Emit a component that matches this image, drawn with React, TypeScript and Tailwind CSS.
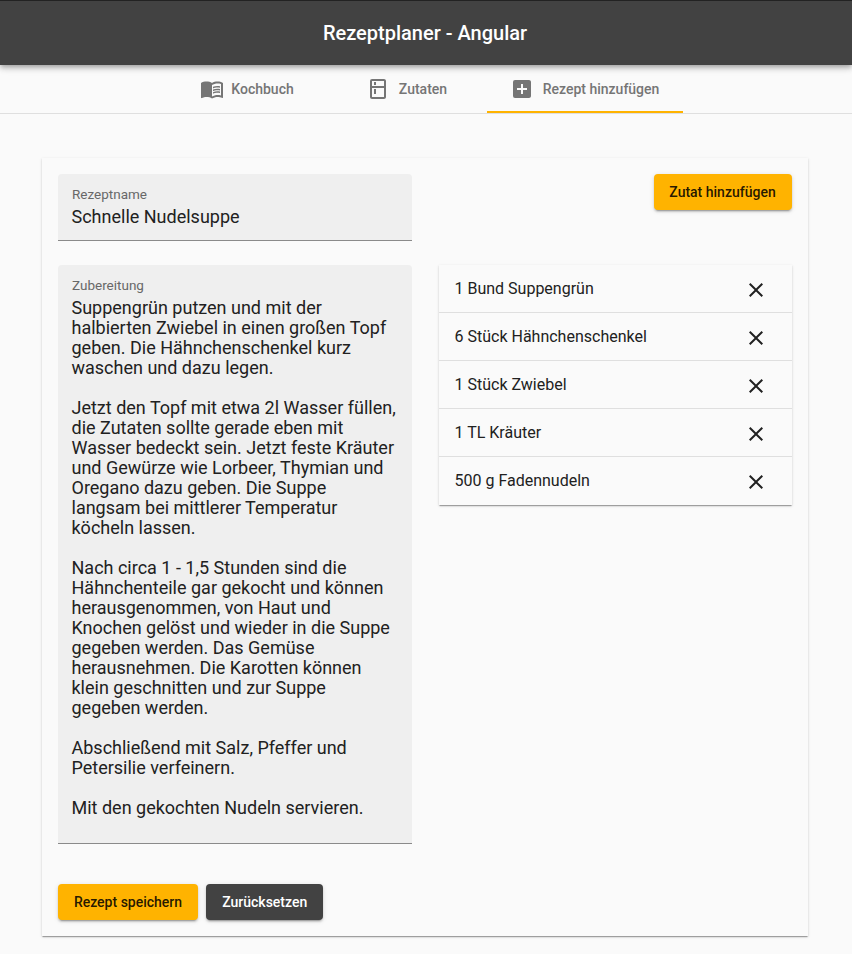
import React from "react";
import { MdMenuBook, MdOutlineKitchen, MdAddBox, MdClose } from "react-icons/md";

const ingredients = [
  "1 Bund Suppengrün",
  "6 Stück Hähnchenschenkel",
  "1 Stück Zwiebel",
  "1 TL Kräuter",
  "500 g Fadennudeln",
];

const preparation = `Suppengrün putzen und mit der
halbierten Zwiebel in einen großen Topf
geben. Die Hähnchenschenkel kurz
waschen und dazu legen.

Jetzt den Topf mit etwa 2l Wasser füllen,
die Zutaten sollte gerade eben mit
Wasser bedeckt sein. Jetzt feste Kräuter
und Gewürze wie Lorbeer, Thymian und
Oregano dazu geben. Die Suppe
langsam bei mittlerer Temperatur
köcheln lassen.

Nach circa 1 - 1,5 Stunden sind die
Hähnchenteile gar gekocht und können
herausgenommen, von Haut und
Knochen gelöst und wieder in die Suppe
gegeben werden. Das Gemüse
herausnehmen. Die Karotten können
klein geschnitten und zur Suppe
gegeben werden.

Abschließend mit Salz, Pfeffer und
Petersilie verfeinern.

Mit den gekochten Nudeln servieren.`;

const raised =
  "shadow-[0_3px_1px_-2px_rgba(0,0,0,0.2),0_2px_2px_0_rgba(0,0,0,0.14),0_1px_5px_0_rgba(0,0,0,0.12)]";
const flat =
  "shadow-[0_2px_1px_-1px_rgba(0,0,0,0.2),0_1px_1px_0_rgba(0,0,0,0.14),0_1px_3px_0_rgba(0,0,0,0.12)]";

export default function App() {
  return (
    <div className="h-[954px] w-[852px] overflow-hidden bg-[#fafafa] font-[Roboto,sans-serif] text-[#212121]">
      <header className="relative flex h-[65px] items-center justify-center border-t border-[#222] bg-[#424242] pr-[2px] text-xl font-medium text-white shadow-[0_2px_4px_-1px_rgba(0,0,0,0.2),0_4px_5px_0_rgba(0,0,0,0.14),0_1px_10px_0_rgba(0,0,0,0.12)]">
        <h1>Rezeptplaner - Angular</h1>
      </header>
      <nav className="flex h-[49px] border-b border-[#dfdfdf] pl-[167px] text-sm font-medium text-[#757575]">
        <a className="flex w-[160px] items-center justify-center gap-[7.5px] pr-[0.5px]">
          <MdMenuBook size={24} />
          Kochbuch
        </a>
        <a className="flex w-[160px] items-center justify-center gap-[9px] pr-[1px]">
          <MdOutlineKitchen size={24} />
          Zutaten
        </a>
        <a className="flex w-[196px] items-center justify-center gap-[9px] border-b-2 border-[#ffb300] pt-[2px] pr-[1px]">
          <MdAddBox size={24} />
          Rezept hinzufügen
        </a>
      </nav>
      <main className={`mt-[44px] mr-[44px] ml-[42px] h-[778px] p-4 ${flat}`}>
        <div className="flex justify-between">
          <div className="h-[67px] w-[354px] rounded-t border-b border-[#8a8a8a] bg-[#efefef] px-[13.5px] pt-[12px]">
            <label className="block pl-[0.5px] text-[13.5px] leading-4 text-[#686868]">Rezeptname</label>
            <div className="mt-[5px] text-lg leading-5">Schnelle Nudelsuppe</div>
          </div>
          <button className={`h-9 w-[138px] rounded bg-[#ffb300] pr-[7px] text-sm font-medium text-black/87 ${raised}`}>
            <span className="pl-[6px]">Zutat hinzufügen</span>
          </button>
        </div>
        <div className="mt-6 flex items-start justify-between">
          <div className="h-[579px] w-[354px] rounded-t border-b border-[#8a8a8a] bg-[#efefef] px-[13.5px] pt-[12px]">
            <label className="block pl-[0.5px] text-[13.5px] leading-4 text-[#686868]">Zubereitung</label>
            <div className="mt-[5px] text-lg leading-5 whitespace-pre">{preparation}</div>
          </div>
          <ul className={`w-[353px] ${flat}`}>
            {ingredients.map((item) => (
              <li
                key={item}
                className="flex h-12 items-center justify-between border-b border-[#dfdfdf] pr-6 pl-[15.5px] last:border-transparent"
              >
                {item}
                <MdClose size={24} className="mt-[3px]" />
              </li>
            ))}
          </ul>
        </div>
        <div className="mt-10 flex gap-2 text-sm font-medium">
          <button className={`h-9 w-[140px] rounded bg-[#ffb300] text-black/87 ${raised}`}>Rezept speichern</button>
          <button className={`h-9 w-[117px] rounded bg-[#424242] pl-[0.5px] text-white ${raised}`}>Zurücksetzen</button>
        </div>
      </main>
    </div>
  );
}
